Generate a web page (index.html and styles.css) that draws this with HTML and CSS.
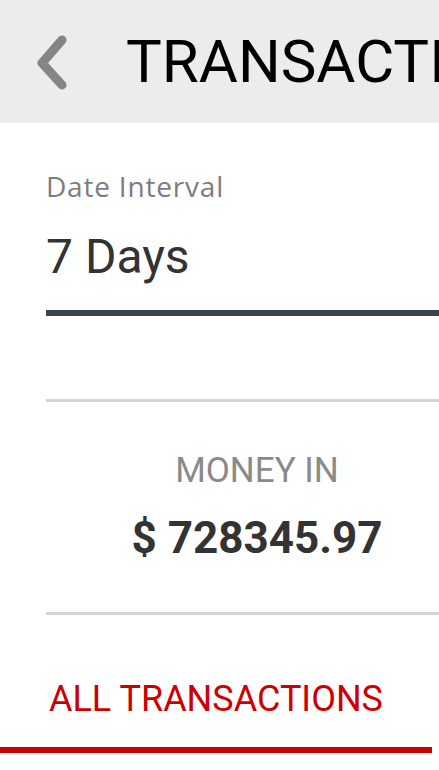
FILE: index.html
```html
<!DOCTYPE html>
<html lang="en">
<head>
    <meta charset="UTF-8">
    <meta name="viewport" content="width=device-width, initial-scale=1.0">
    <title>Transactions</title>
    <link rel="stylesheet" href="styles.css">
</head>
<body>
    <header class="top-bar">
        <button class="back-button" aria-label="Back">
            <svg width="40" height="60" viewBox="0 0 40 60">
                <polyline points="25,8 5,31 25,53" fill="none" stroke="#858585" stroke-width="9" stroke-linecap="round" stroke-linejoin="round"/>
            </svg>
        </button>
        <h1 class="title">TRANSACTIONS</h1>
    </header>

    <main class="content">
        <div class="field">
            <label class="field-label">Date Interval</label>
            <div class="field-value">7 Days</div>
        </div>

        <section class="summary">
            <div class="summary-label">MONEY IN</div>
            <div class="summary-amount">$ 728345.97</div>
        </section>
    </main>

    <nav class="tabs">
        <div class="tab active">ALL TRANSACTIONS</div>
    </nav>
</body>
</html>
```

FILE: styles.css
```css
body {
    font-family: Roboto, 'Noto Sans', sans-serif;
    margin: 0;
    padding: 0;
    background: #fff;
    color: #333;
    overflow: hidden;
    width: 439px;
    height: 770px;
}
.top-bar {
    background: #ececec;
    height: 123px;
    display: flex;
    align-items: center;
    white-space: nowrap;
}
.back-button {
    flex-shrink: 0;
    background: none;
    border: none;
    padding: 0;
    margin-left: 37px;
    margin-right: 49px;
    display: flex;
    cursor: pointer;
}
.title {
    flex-shrink: 0;
    margin: 0;
    font-size: 60px;
    font-weight: 400;
    color: #000;
}
.content {
    margin-left: 46px;
    width: 422px;
}
.field {
    padding-top: 46px;
}
.field-label {
    display: block;
    font-family: 'Open Sans', Roboto, sans-serif;
    font-size: 28px;
    letter-spacing: 0.8px;
    color: #7d7d7d;
    line-height: 34px;
}
.field-value {
    font-size: 48px;
    color: #333;
    line-height: 60px;
    padding: 24px 0 23px 0;
    border-bottom: 6px solid #3b4350;
}
.summary {
    margin-top: 83px;
    border-top: 3px solid #d4d4d4;
    border-bottom: 3px solid #d4d4d4;
    text-align: center;
    padding: 47px 0 48px 0;
}
.summary-label {
    font-size: 35px;
    color: #8a8a8a;
    line-height: 44px;
}
.summary-amount {
    font-size: 44px;
    font-weight: bold;
    color: #333;
    line-height: 52px;
    margin-top: 19px;
}
.tabs {
    display: flex;
    margin-top: 62px;
}
.tab {
    flex: 0 0 432px;
    text-align: center;
    font-size: 36px;
    color: #cc0000;
    line-height: 44px;
    padding-bottom: 26px;
    border-bottom: 6px solid transparent;
}
.tab.active {
    border-bottom-color: #cc0000;
}
```
